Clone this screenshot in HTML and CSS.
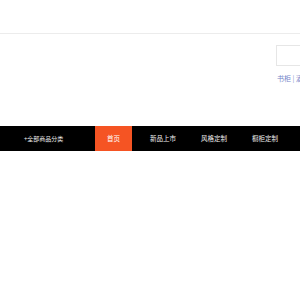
FILE: index.html
```html
<!DOCTYPE html>
<html lang="zh-CN">
<head>
    <meta charset="UTF-8">
    <meta name="viewport" content="width=device-width, initial-scale=1.0">
    <title>首页</title>
    <link rel="stylesheet" href="styles.css">
</head>
<body>
    <div class="topbar"></div>
    <div class="header">
        <div class="search">
            <div class="search-box"></div>
            <div class="hot-words">
                <a href="#">书柜</a> | <a href="#">酒柜</a> | <a href="#">衣柜</a>
            </div>
        </div>
    </div>
    <div class="nav">
        <div class="category">+全部商品分类</div>
        <ul class="nav-list">
            <li class="nav-item active">首页</li>
            <li class="nav-item">新品上市</li>
            <li class="nav-item">风格定制</li>
            <li class="nav-item">橱柜定制</li>
        </ul>
    </div>
</body>
</html>
```

FILE: styles.css
```css
html, body {
    overflow: hidden;
}
body {
    margin: 0;
    font-family: "Noto Sans CJK SC", "Noto Sans", sans-serif;
    background-color: #fff;
}
.topbar {
    height: 33px;
    border-bottom: 1px solid #ececec;
}
.header {
    height: 92px;
}
.search {
    padding-top: 11px;
    padding-left: 276px;
    width: 200px;
}
.search-box {
    height: 19px;
    border: 1px solid #e6e6e6;
}
.hot-words {
    margin-top: 7px;
    padding-left: 1px;
    font-size: 7px;
    line-height: 10px;
    color: #8090d0;
    white-space: nowrap;
}
.hot-words a {
    color: #7484c8;
    text-decoration: none;
}
.nav {
    display: flex;
    height: 25px;
    background-color: #000;
    color: #eee;
}
.category {
    width: 95px;
    padding-left: 24px;
    box-sizing: border-box;
    font-size: 6px;
    line-height: 25px;
}
.nav-list {
    display: flex;
    margin: 0;
    padding: 0;
    list-style: none;
}
.nav-item {
    padding: 0 12px;
    font-size: 6.5px;
    line-height: 25px;
    white-space: nowrap;
}
.nav-item + .nav-item {
    margin-left: 1px;
}
.nav-item.active {
    background-color: #f55423;
    color: #fff;
    margin-right: 5px;
}
```
